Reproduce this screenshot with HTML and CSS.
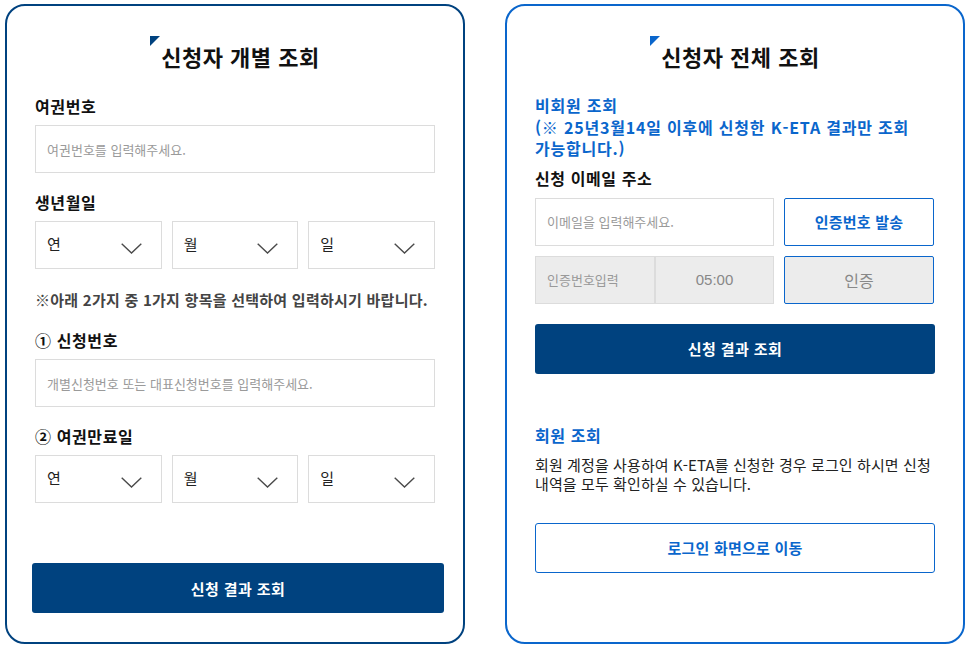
FILE: index.html
```html
<!DOCTYPE html>
<html lang="ko">
<head>
<meta charset="utf-8">
<title>신청 결과 조회</title>
<link rel="stylesheet" href="styles.css">
</head>
<body>
<div class="page">
  <section class="card card-navy">
    <h2 class="card-title"><span class="mark"></span>신청자 개별 조회</h2>

    <div class="field field-first">
      <div class="label">여권번호</div>
      <input class="input" type="text" placeholder="여권번호를 입력해주세요.">
    </div>

    <div class="field field-birth">
      <div class="label">생년월일</div>
      <div class="selects">
        <div class="select"><span>연</span><svg class="chev" width="21" height="11" viewBox="0 0 21 11"><polyline points="0.7,0.7 10.5,10 20.3,0.7" fill="none" stroke="#4a4a4a" stroke-width="1.4"/></svg></div>
        <div class="select"><span>월</span><svg class="chev" width="21" height="11" viewBox="0 0 21 11"><polyline points="0.7,0.7 10.5,10 20.3,0.7" fill="none" stroke="#4a4a4a" stroke-width="1.4"/></svg></div>
        <div class="select"><span>일</span><svg class="chev" width="21" height="11" viewBox="0 0 21 11"><polyline points="0.7,0.7 10.5,10 20.3,0.7" fill="none" stroke="#4a4a4a" stroke-width="1.4"/></svg></div>
      </div>
    </div>

    <p class="note">※아래 2가지 중 1가지 항목을 선택하여 입력하시기 바랍니다.</p>

    <div class="field field-appno">
      <div class="label">① 신청번호</div>
      <input class="input" type="text" placeholder="개별신청번호 또는 대표신청번호를 입력해주세요.">
    </div>

    <div class="field field-expiry">
      <div class="label">② 여권만료일</div>
      <div class="selects">
        <div class="select"><span>연</span><svg class="chev" width="21" height="11" viewBox="0 0 21 11"><polyline points="0.7,0.7 10.5,10 20.3,0.7" fill="none" stroke="#4a4a4a" stroke-width="1.4"/></svg></div>
        <div class="select"><span>월</span><svg class="chev" width="21" height="11" viewBox="0 0 21 11"><polyline points="0.7,0.7 10.5,10 20.3,0.7" fill="none" stroke="#4a4a4a" stroke-width="1.4"/></svg></div>
        <div class="select"><span>일</span><svg class="chev" width="21" height="11" viewBox="0 0 21 11"><polyline points="0.7,0.7 10.5,10 20.3,0.7" fill="none" stroke="#4a4a4a" stroke-width="1.4"/></svg></div>
      </div>
    </div>

    <button class="btn-primary btn-left" type="button">신청 결과 조회</button>
  </section>

  <section class="card card-blue">
    <h2 class="card-title"><span class="mark mark-blue"></span>신청자 전체 조회</h2>

    <p class="blue-head">비회원 조회<br>(※ 25년3월14일 이후에 신청한 K-ETA 결과만 조회 가능합니다.)</p>

    <div class="label label-email">신청 이메일 주소</div>
    <div class="row">
      <input class="input input-email" type="text" placeholder="이메일을 입력해주세요.">
      <button class="btn-outline btn-side" type="button">인증번호 발송</button>
    </div>
    <div class="row row-cert">
      <div class="cert-group">
        <div class="cert-box cert-input">인증번호입력</div>
        <div class="cert-box cert-time">05:00</div>
      </div>
      <button class="btn-disabled btn-side" type="button">인증</button>
    </div>

    <button class="btn-primary btn-right" type="button">신청 결과 조회</button>

    <div class="blue-label">회원 조회</div>
    <p class="desc">회원 계정을 사용하여 K-ETA를 신청한 경우 로그인 하시면 신청 내역을 모두 확인하실 수 있습니다.</p>

    <button class="btn-outline btn-login" type="button">로그인 화면으로 이동</button>
  </section>
</div>
</body>
</html>
```

FILE: styles.css
```css
* {
  box-sizing: border-box;
}

html, body {
  margin: 0;
  padding: 0;
  background: #ffffff;
}

body {
  font-family: "Noto Sans CJK KR", "Noto Sans", "Liberation Sans", sans-serif;
  color: #111111;
}

.page {
  display: flex;
  gap: 40px;
  padding: 4px 0 0 5px;
}

.card {
  width: 460px;
  height: 640px;
  border: 2px solid #00427f;
  border-radius: 20px;
  padding: 35px 28px 29px 28px;
  display: flex;
  flex-direction: column;
  background: #fff;
}

.card-blue {
  border-color: #0a66cc;
}

.card-title {
  margin: 0 0 23px 0;
  display: flex;
  justify-content: center;
  align-items: flex-start;
  font-size: 22px;
  line-height: 30px;
  font-weight: 700;
  letter-spacing: 0.5px;
  color: #111;
}

.mark {
  width: 0;
  height: 0;
  border-top: 10px solid #00427f;
  border-right: 10px solid transparent;
  margin-top: -5px;
  margin-right: 1px;
}

.mark-blue {
  border-top-color: #0a66cc;
}

.label {
  font-size: 16px;
  line-height: 24px;
  font-weight: 700;
  letter-spacing: 0.6px;
  color: #111;
  margin-bottom: 7px;
}

.field-birth {
  margin-top: 17px;
}

.field-appno {
  margin-top: 18px;
}

.field-expiry {
  margin-top: 17px;
}

.input {
  display: block;
  width: 100%;
  height: 48px;
  border: 1px solid #dcdcdc;
  border-radius: 0;
  padding: 0 11px;
  font-family: inherit;
  font-size: 13px;
  color: #333;
  outline: none;
  background: #fff;
}

.input::placeholder {
  color: #9a9a9a;
}

.selects {
  display: flex;
  gap: 10px;
}

.select {
  flex: 1;
  height: 48px;
  border: 1px solid #dcdcdc;
  display: flex;
  align-items: center;
  justify-content: space-between;
  padding: 0 19px 0 11px;
  font-size: 15px;
  color: #222;
}

.select span {
  margin-top: -3px;
}

.chev {
  display: block;
  margin-top: 6px;
}

.note {
  margin: 21px 0 0 0;
  font-size: 15px;
  line-height: 20px;
  font-weight: 700;
  letter-spacing: 0.25px;
  color: #444;
}

.btn-primary {
  display: block;
  height: 50px;
  border: none;
  border-radius: 3px;
  background: #00427f;
  color: #fff;
  font-family: inherit;
  font-size: 15px;
  font-weight: 700;
  letter-spacing: 0.4px;
  cursor: pointer;
}

.btn-left {
  margin: auto -9px 0 -3px;
}

.btn-right {
  width: 100%;
  margin-top: 20px;
}

.blue-head {
  margin: 1px 0 0 0;
  font-size: 16px;
  line-height: 21.5px;
  font-weight: 700;
  letter-spacing: 0.8px;
  color: #0a66cc;
  word-break: keep-all;
}

.label-email {
  margin-top: 6px;
  margin-bottom: 8px;
}

.row {
  display: flex;
  gap: 10px;
}

.row-cert {
  margin-top: 10px;
}

.input-email {
  width: 239px;
  flex: none;
}

.btn-side {
  width: 150px;
  height: 48px;
  flex: none;
  border-radius: 2px;
  font-family: inherit;
  font-size: 15px;
}

.btn-outline {
  background: #fff;
  border: 1px solid #0a66cc;
  color: #0a66cc;
  font-weight: 700;
  letter-spacing: 0.2px;
}

.btn-disabled {
  background: #ececec;
  border: 1px solid #0a66cc;
  color: #888;
  font-size: 16px;
}

.cert-group {
  display: flex;
  width: 239px;
  flex: none;
}

.cert-box {
  height: 48px;
  background: #ececec;
  border: 1px solid #dcdcdc;
  display: flex;
  align-items: center;
  font-size: 13px;
  color: #999;
}

.cert-input {
  width: 120px;
  padding-left: 11px;
}

.cert-time {
  width: 119px;
  justify-content: center;
  font-family: "Liberation Sans", "Noto Sans CJK KR", sans-serif;
  font-size: 15px;
  color: #888;
}

.blue-label {
  margin-top: 49px;
  font-size: 16px;
  line-height: 24px;
  font-weight: 700;
  letter-spacing: 0.6px;
  color: #0a66cc;
}

.desc {
  margin: 8px 0 0 0;
  font-size: 15px;
  line-height: 19px;
  color: #222;
  letter-spacing: 0.1px;
  word-break: keep-all;
}

.btn-login {
  width: 100%;
  height: 50px;
  margin-top: 30px;
  border-radius: 3px;
  font-family: inherit;
  font-size: 15px;
}
```
